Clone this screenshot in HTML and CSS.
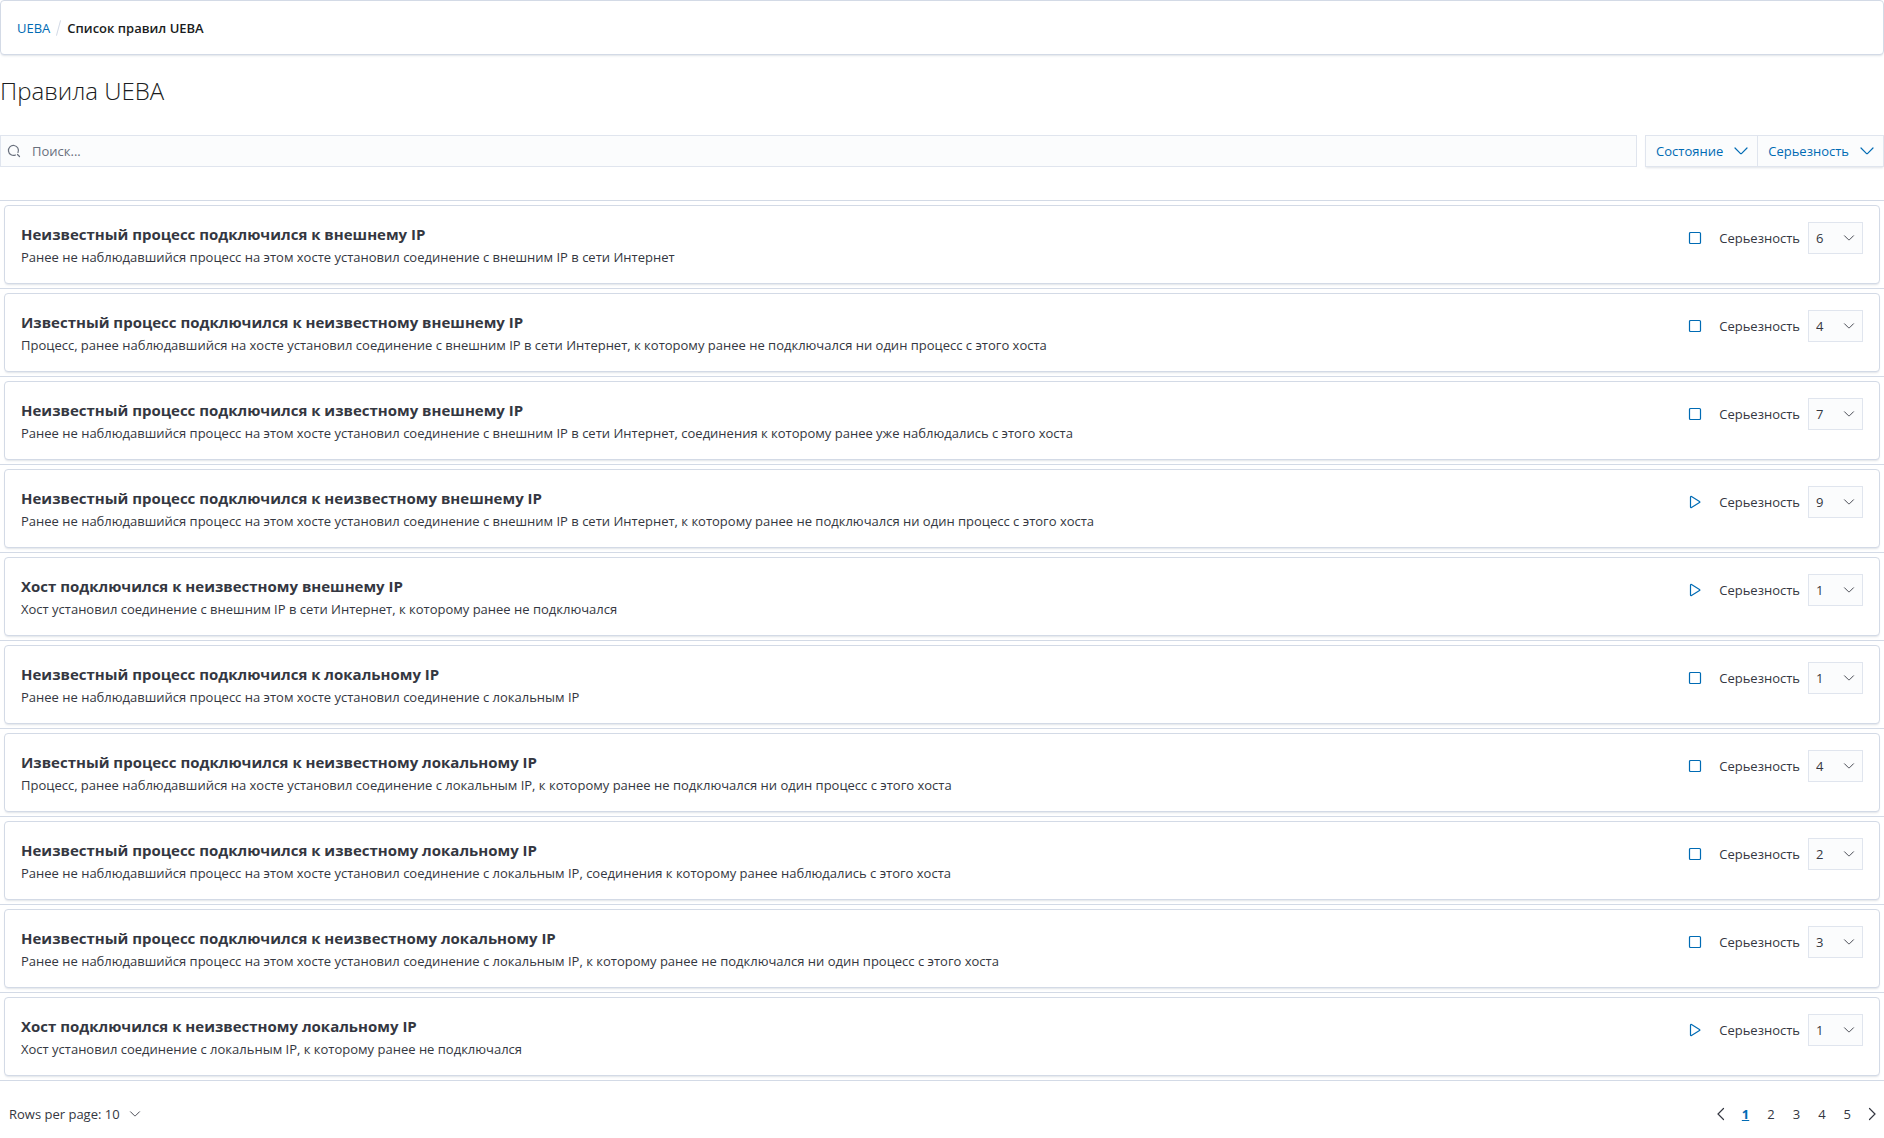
FILE: index.html
```html
<!DOCTYPE html>
<html lang="ru">
<head>
<meta charset="utf-8">
<meta name="viewport" content="width=device-width, initial-scale=1">
<title>Список правил UEBA</title>
<link rel="stylesheet" href="styles.css">
</head>
<body>
<svg class="sprite" aria-hidden="true">
  <symbol id="chevron" viewBox="0 0 16 16"><path d="M2 5l5.300 5.300c.4.4 1 .4 1.400 0L14 5" fill="none" stroke="currentColor" stroke-width="1.200" stroke-linecap="round" stroke-linejoin="round"/></symbol>
  <symbol id="stop" viewBox="0 0 16 16"><rect x="2.500" y="2.500" width="11" height="11" rx="1" fill="none" stroke="currentColor" stroke-width="1.200"/></symbol>
  <symbol id="play" viewBox="0 0 16 16"><path d="M3.500 3.100v9.800c0 .6.5.9 1 .6l8-4.900c.5-.3.5-.9 0-1.200l-8-4.900c-.5-.3-1 0-1 .6z" fill="none" stroke="currentColor" stroke-width="1.200"/></symbol>
  <symbol id="search" viewBox="0 0 16 16"><path d="M9.500 12A5 5 0 1 1 12 9.500M11.500 11.500l2 2" fill="none" stroke="currentColor" stroke-width="1.200" stroke-linecap="round"/></symbol>
  <symbol id="prev" viewBox="0 0 16 16"><path d="M10.500 2.500 5 8l5.500 5.500" fill="none" stroke="currentColor" stroke-width="1.200" stroke-linecap="round"/></symbol>
  <symbol id="next" viewBox="0 0 16 16"><path d="M5.500 2.500 11 8l-5.500 5.500" fill="none" stroke="currentColor" stroke-width="1.200" stroke-linecap="round"/></symbol>
</svg>

<nav class="breadcrumbs panel" aria-label="Навигация">
  <a class="crumb-link" href="#">UEBA</a>
  <span class="crumb-divider" aria-hidden="true"></span>
  <span class="crumb-current">Список правил UEBA</span>
</nav>

<main>
  <h1 class="page-title">Правила UEBA</h1>

  <div class="toolbar">
    <div class="search">
      <svg class="icon"><use href="#search"/></svg>
      <input class="search-input" type="search" placeholder="Поиск..." aria-label="Поиск">
    </div>
    <div class="filters">
      <button class="filter" type="button">Состояние <svg class="icon"><use href="#chevron"/></svg></button>
      <button class="filter" type="button">Серьезность <svg class="icon"><use href="#chevron"/></svg></button>
    </div>
  </div>

  <ul class="rules">
    <li class="rule">
      <article class="card panel">
        <div class="card-text">
          <h2 class="card-title">Неизвестный процесс подключился к внешнему IP</h2>
          <p class="card-desc">Ранее не наблюдавшийся процесс на этом хосте установил соединение с внешним IP в сети Интернет</p>
        </div>
        <div class="controls">
          <button class="toggle" type="button" aria-label="Остановить"><svg class="icon"><use href="#stop"/></svg></button>
          <label class="severity-label" for="s1">Серьезность</label>
          <span class="select"><select id="s1"><option>1</option><option>2</option><option>3</option><option>4</option><option>5</option><option selected>6</option><option>7</option><option>8</option><option>9</option></select><svg class="icon-small"><use href="#chevron"/></svg></span>
        </div>
      </article>
    </li>
    <li class="rule">
      <article class="card panel">
        <div class="card-text">
          <h2 class="card-title">Известный процесс подключился к неизвестному внешнему IP</h2>
          <p class="card-desc">Процесс, ранее наблюдавшийся на хосте установил соединение с внешним IP в сети Интернет, к которому ранее не подключался ни один процесс с этого хоста</p>
        </div>
        <div class="controls">
          <button class="toggle" type="button" aria-label="Остановить"><svg class="icon"><use href="#stop"/></svg></button>
          <label class="severity-label" for="s2">Серьезность</label>
          <span class="select"><select id="s2"><option>1</option><option>2</option><option>3</option><option selected>4</option><option>5</option><option>6</option><option>7</option><option>8</option><option>9</option></select><svg class="icon-small"><use href="#chevron"/></svg></span>
        </div>
      </article>
    </li>
    <li class="rule">
      <article class="card panel">
        <div class="card-text">
          <h2 class="card-title">Неизвестный процесс подключился к известному внешнему IP</h2>
          <p class="card-desc">Ранее не наблюдавшийся процесс на этом хосте установил соединение с внешним IP в сети Интернет, соединения к которому ранее уже наблюдались с этого хоста</p>
        </div>
        <div class="controls">
          <button class="toggle" type="button" aria-label="Остановить"><svg class="icon"><use href="#stop"/></svg></button>
          <label class="severity-label" for="s3">Серьезность</label>
          <span class="select"><select id="s3"><option>1</option><option>2</option><option>3</option><option>4</option><option>5</option><option>6</option><option selected>7</option><option>8</option><option>9</option></select><svg class="icon-small"><use href="#chevron"/></svg></span>
        </div>
      </article>
    </li>
    <li class="rule">
      <article class="card panel">
        <div class="card-text">
          <h2 class="card-title">Неизвестный процесс подключился к неизвестному внешнему IP</h2>
          <p class="card-desc">Ранее не наблюдавшийся процесс на этом хосте установил соединение с внешним IP в сети Интернет, к которому ранее не подключался ни один процесс с этого хоста</p>
        </div>
        <div class="controls">
          <button class="toggle" type="button" aria-label="Запустить"><svg class="icon"><use href="#play"/></svg></button>
          <label class="severity-label" for="s4">Серьезность</label>
          <span class="select"><select id="s4"><option>1</option><option>2</option><option>3</option><option>4</option><option>5</option><option>6</option><option>7</option><option>8</option><option selected>9</option></select><svg class="icon-small"><use href="#chevron"/></svg></span>
        </div>
      </article>
    </li>
    <li class="rule">
      <article class="card panel">
        <div class="card-text">
          <h2 class="card-title">Хост подключился к неизвестному внешнему IP</h2>
          <p class="card-desc">Хост установил соединение с внешним IP в сети Интернет, к которому ранее не подключался</p>
        </div>
        <div class="controls">
          <button class="toggle" type="button" aria-label="Запустить"><svg class="icon"><use href="#play"/></svg></button>
          <label class="severity-label" for="s5">Серьезность</label>
          <span class="select"><select id="s5"><option selected>1</option><option>2</option><option>3</option><option>4</option><option>5</option><option>6</option><option>7</option><option>8</option><option>9</option></select><svg class="icon-small"><use href="#chevron"/></svg></span>
        </div>
      </article>
    </li>
    <li class="rule">
      <article class="card panel">
        <div class="card-text">
          <h2 class="card-title">Неизвестный процесс подключился к локальному IP</h2>
          <p class="card-desc">Ранее не наблюдавшийся процесс на этом хосте установил соединение с локальным IP</p>
        </div>
        <div class="controls">
          <button class="toggle" type="button" aria-label="Остановить"><svg class="icon"><use href="#stop"/></svg></button>
          <label class="severity-label" for="s6">Серьезность</label>
          <span class="select"><select id="s6"><option selected>1</option><option>2</option><option>3</option><option>4</option><option>5</option><option>6</option><option>7</option><option>8</option><option>9</option></select><svg class="icon-small"><use href="#chevron"/></svg></span>
        </div>
      </article>
    </li>
    <li class="rule">
      <article class="card panel">
        <div class="card-text">
          <h2 class="card-title">Известный процесс подключился к неизвестному локальному IP</h2>
          <p class="card-desc">Процесс, ранее наблюдавшийся на хосте установил соединение с локальным IP, к которому ранее не подключался ни один процесс с этого хоста</p>
        </div>
        <div class="controls">
          <button class="toggle" type="button" aria-label="Остановить"><svg class="icon"><use href="#stop"/></svg></button>
          <label class="severity-label" for="s7">Серьезность</label>
          <span class="select"><select id="s7"><option>1</option><option>2</option><option>3</option><option selected>4</option><option>5</option><option>6</option><option>7</option><option>8</option><option>9</option></select><svg class="icon-small"><use href="#chevron"/></svg></span>
        </div>
      </article>
    </li>
    <li class="rule">
      <article class="card panel">
        <div class="card-text">
          <h2 class="card-title">Неизвестный процесс подключился к известному локальному IP</h2>
          <p class="card-desc">Ранее не наблюдавшийся процесс на этом хосте установил соединение с локальным IP, соединения к которому ранее наблюдались с этого хоста</p>
        </div>
        <div class="controls">
          <button class="toggle" type="button" aria-label="Остановить"><svg class="icon"><use href="#stop"/></svg></button>
          <label class="severity-label" for="s8">Серьезность</label>
          <span class="select"><select id="s8"><option>1</option><option selected>2</option><option>3</option><option>4</option><option>5</option><option>6</option><option>7</option><option>8</option><option>9</option></select><svg class="icon-small"><use href="#chevron"/></svg></span>
        </div>
      </article>
    </li>
    <li class="rule">
      <article class="card panel">
        <div class="card-text">
          <h2 class="card-title">Неизвестный процесс подключился к неизвестному локальному IP</h2>
          <p class="card-desc">Ранее не наблюдавшийся процесс на этом хосте установил соединение с локальным IP, к которому ранее не подключался ни один процесс с этого хоста</p>
        </div>
        <div class="controls">
          <button class="toggle" type="button" aria-label="Остановить"><svg class="icon"><use href="#stop"/></svg></button>
          <label class="severity-label" for="s9">Серьезность</label>
          <span class="select"><select id="s9"><option>1</option><option>2</option><option selected>3</option><option>4</option><option>5</option><option>6</option><option>7</option><option>8</option><option>9</option></select><svg class="icon-small"><use href="#chevron"/></svg></span>
        </div>
      </article>
    </li>
    <li class="rule">
      <article class="card panel">
        <div class="card-text">
          <h2 class="card-title">Хост подключился к неизвестному локальному IP</h2>
          <p class="card-desc">Хост установил соединение с локальным IP, к которому ранее не подключался</p>
        </div>
        <div class="controls">
          <button class="toggle" type="button" aria-label="Запустить"><svg class="icon"><use href="#play"/></svg></button>
          <label class="severity-label" for="s10">Серьезность</label>
          <span class="select"><select id="s10"><option selected>1</option><option>2</option><option>3</option><option>4</option><option>5</option><option>6</option><option>7</option><option>8</option><option>9</option></select><svg class="icon-small"><use href="#chevron"/></svg></span>
        </div>
      </article>
    </li>
  </ul>
</main>

<footer class="pagination">
  <button class="page-size" type="button">Rows per page: 10 <svg class="icon-small"><use href="#chevron"/></svg></button>
  <nav class="pages" aria-label="Страницы">
    <button class="page-arrow" type="button" aria-label="Назад"><svg class="icon"><use href="#prev"/></svg></button>
    <span class="page-list">
      <a class="page current" href="#" aria-current="page">1</a>
      <a class="page" href="#">2</a>
      <a class="page" href="#">3</a>
      <a class="page" href="#">4</a>
      <a class="page" href="#">5</a>
    </span>
    <button class="page-arrow" type="button" aria-label="Вперед"><svg class="icon"><use href="#next"/></svg></button>
  </nav>
</footer>
</body>
</html>
```
FILE: styles.css
```css
:root {
  --text: #343741;
  --title: #1a1c21;
  --link: #006bb4;
  --border: #d3dae6;
  --field-border: #e0e5ee;
  --field: #fbfcfd;
}

* {
  box-sizing: border-box;
}

body {
  margin: 0;
  background: #fff;
  color: var(--text);
  font-family: "Open Sans", "Noto Sans", sans-serif;
  font-size: 13px;
  line-height: 20px;
}

h1, h2, p, ul {
  margin: 0;
  padding: 0;
}

button, input, select {
  margin: 0;
  color: inherit;
  font: inherit;
}

button {
  padding: 0;
  border: 0;
  background: none;
  cursor: pointer;
}

a {
  color: inherit;
  text-decoration: none;
}

.sprite {
  display: none;
}

.icon {
  flex: none;
  width: 16px;
  height: 16px;
}

.icon-small {
  flex: none;
  width: 12px;
  height: 12px;
}

.panel {
  border: 1px solid var(--border);
  border-radius: 4px;
  background: #fff;
  box-shadow: 0 2px 2px -1px rgba(152, 162, 179, 0.3);
}

.breadcrumbs {
  display: flex;
  align-items: center;
  padding: 17px 16px 16px;
}

.crumb-link {
  color: var(--link);
}

.crumb-divider {
  width: 1px;
  height: 16px;
  margin: 0 8px;
  background: var(--border);
  transform: rotate(15deg);
}

.crumb-current {
  color: var(--title);
  font-weight: 600;
}

.page-title {
  margin: 16px 0 24px;
  color: var(--title);
  font-size: 24px;
  font-weight: 300;
  line-height: 40px;
}

.toolbar {
  display: flex;
  gap: 8px;
  margin-bottom: 33px;
}

.search {
  display: flex;
  flex: 1;
  align-items: center;
  gap: 8px;
  height: 32px;
  padding-left: 5px;
  border: 1px solid var(--field-border);
  background: var(--field);
  color: #69707d;
}

.search-input {
  flex: 1;
  min-width: 0;
  border: 0;
  outline: 0;
  background: none;
}

.search-input::placeholder {
  color: #69707d;
  opacity: 1;
}

.filters {
  display: flex;
  border: 1px solid var(--field-border);
  background: var(--field);
  box-shadow: 0 2px 2px -1px rgba(152, 162, 179, 0.3);
}

.filter {
  display: flex;
  align-items: center;
  gap: 10px;
  padding: 0 8px 0 10px;
  color: var(--link);
}

.filter + .filter {
  border-left: 1px solid var(--field-border);
}

.rules {
  border-bottom: 1px solid var(--border);
  list-style: none;
}

.rule {
  padding: 4px;
  border-top: 1px solid var(--border);
}

.card {
  display: flex;
  justify-content: space-between;
  gap: 16px;
  padding: 16px;
}

.card-title {
  color: var(--text);
  font-size: 15px;
  font-weight: 700;
  line-height: 25px;
}

.controls {
  display: flex;
  flex: none;
  align-items: center;
  height: 32px;
}

.toggle {
  display: flex;
  align-items: center;
  justify-content: center;
  width: 24px;
  height: 24px;
  margin-right: 12px;
  color: var(--link);
}

.severity-label {
  margin-right: 8px;
}

.select {
  display: grid;
  align-items: center;
  width: 55px;
}

.select select {
  grid-area: 1 / 1;
  height: 32px;
  padding: 0 24px 0 7px;
  border: 1px solid var(--field-border);
  border-radius: 0;
  background: var(--field);
  appearance: none;
}

.select .icon-small {
  grid-area: 1 / 1;
  justify-self: end;
  margin-right: 8px;
  pointer-events: none;
}

.pagination {
  display: flex;
  align-items: center;
  justify-content: space-between;
  padding: 21px 4px 12px 9px;
}

.page-size {
  display: flex;
  align-items: center;
  gap: 9px;
}

.pages {
  display: flex;
  align-items: center;
  gap: 4px;
}

.page-list {
  display: flex;
}

.page {
  padding: 0 9px;
}

.page-arrow {
  display: flex;
  height: 24px;
  align-items: center;
}

.current {
  color: var(--link);
  font-weight: 700;
  text-decoration: underline;
}
```
